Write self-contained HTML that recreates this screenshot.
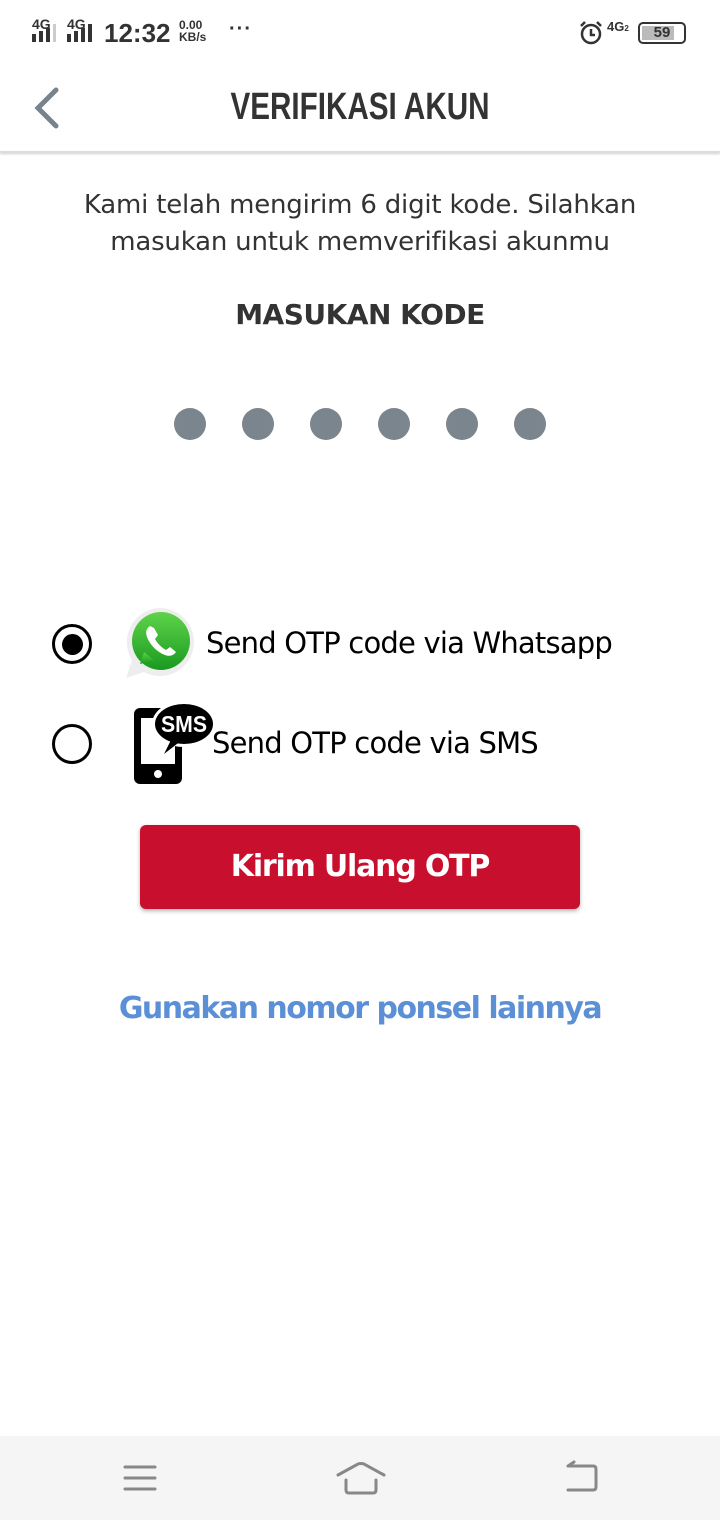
<!DOCTYPE html>
<html><head><meta charset="utf-8"><style>
body{margin:0;width:720px;height:1520px;position:relative;background:#fff;font-family:"Liberation Sans",sans-serif;overflow:hidden}
.a{position:absolute}
.dot{position:absolute;top:408px;width:32px;height:32px;border-radius:50%;background:#7b858d}
</style></head><body>
<!-- status bar -->
<div class="a" style="left:32px;top:16px;font:bold 14px 'Liberation Sans';color:#333">4G</div>
<div class="a" style="left:32px;top:34px;width:4px;height:8px;background:#333"></div>
<div class="a" style="left:39px;top:31px;width:4px;height:11px;background:#333"></div>
<div class="a" style="left:46px;top:28px;width:4px;height:14px;background:#333"></div>
<div class="a" style="left:53px;top:24px;width:3px;height:18px;background:#ccc"></div>
<div class="a" style="left:67px;top:16px;font:bold 14px 'Liberation Sans';color:#333">4G</div>
<div class="a" style="left:67px;top:34px;width:4px;height:8px;background:#333"></div>
<div class="a" style="left:74px;top:31px;width:4px;height:11px;background:#333"></div>
<div class="a" style="left:81px;top:28px;width:4px;height:14px;background:#333"></div>
<div class="a" style="left:88px;top:24px;width:4px;height:18px;background:#333"></div>
<div class="a" style="left:104px;top:18px;font:bold 26px 'Liberation Sans';color:#333">12:32</div>
<div class="a" style="left:179px;top:19px;font:bold 12px/12px 'Liberation Sans';color:#333">0.00<br>KB/s</div>
<div class="a" style="left:229px;top:18px;font:bold 20px 'Liberation Sans';color:#333;letter-spacing:1px">···</div>
<svg class="a" style="left:578px;top:20px" width="26" height="26" viewBox="0 0 26 26"><circle cx="13" cy="14" r="9" fill="none" stroke="#333" stroke-width="2.5"/><path d="M13 9v6h4M3 6l4-4M23 6l-4-4" stroke="#333" stroke-width="2.5" fill="none"/></svg>
<div class="a" style="left:607px;top:19px;font:bold 13px 'Liberation Sans';color:#333">4G<span style="font-size:8px">2</span></div>
<div class="a" style="left:638px;top:22px;width:44px;height:18px;border:2px solid #333;border-radius:5px"></div>
<div class="a" style="left:642px;top:26px;width:32px;height:14px;background:#bbb"></div>
<div class="a" style="left:642px;top:22px;width:40px;text-align:center;font:bold 15px 'Liberation Sans';color:#333;line-height:22px">59</div>
<!-- header -->
<svg class="a" style="left:28px;top:86px" width="34" height="44"><path d="M28 4L10 22l18 18" stroke="#78838c" stroke-width="5" fill="none" stroke-linecap="round"/></svg>
<div class="a" style="left:0;top:86px;width:720px;text-align:center;font:bold 38px 'Liberation Sans Narrow','Liberation Sans',sans-serif;color:#333;transform:scaleX(0.78)">VERIFIKASI AKUN</div>
<div class="a" style="left:0;top:151px;width:720px;height:2px;background:#ddd;box-shadow:0 1px 2px #ccc"></div>
<!-- body -->
<div class="a" style="left:0;top:187px;width:720px;text-align:center;font:26px/37px 'DejaVu Sans','Liberation Sans',sans-serif;color:#333;letter-spacing:-0.2px">Kami telah mengirim 6 digit kode. Silahkan<br>masukan untuk memverifikasi akunmu</div>
<div class="a" style="left:0;top:298px;width:720px;text-align:center;font:bold 28px 'DejaVu Sans','Liberation Sans',sans-serif;color:#333;letter-spacing:-0.5px">MASUKAN KODE</div>
<div class="dot" style="left:174px"></div><div class="dot" style="left:242px"></div><div class="dot" style="left:310px"></div><div class="dot" style="left:378px"></div><div class="dot" style="left:446px"></div><div class="dot" style="left:514px"></div>
<!-- options -->
<div class="a" style="left:52px;top:624px;width:34px;height:34px;border:3.5px solid #000;border-radius:50%"></div>
<div class="a" style="left:62px;top:634px;width:21px;height:21px;background:#000;border-radius:50%"></div>
<svg class="a" style="left:122px;top:606px" width="74" height="74" viewBox="0 0 74 74"><defs><linearGradient id="g" x1="0" y1="0" x2="0" y2="1"><stop offset="0" stop-color="#5fd34a"/><stop offset="1" stop-color="#1a9a20"/></linearGradient></defs><path d="M38 2a34 34 0 1 1-16 64L4 72l6-18A34 34 0 0 1 38 2z" fill="#eee"/><circle cx="39" cy="35" r="29" fill="url(#g)"/><path d="M18 58l4-12 10 8z" fill="url(#g)"/><path d="M28 20c-3 2-5 5-3 11 3 8 10 15 18 18 5 2 9 0 11-3l-6-5-4 3c-4-2-9-7-11-11l3-4-4-7z" fill="#fff"/></svg>
<div class="a" style="left:206px;top:626px;font:29px 'DejaVu Sans','Liberation Sans',sans-serif;color:#000;letter-spacing:-0.8px">Send OTP code via Whatsapp</div>
<div class="a" style="left:52px;top:724px;width:34px;height:34px;border:3.5px solid #000;border-radius:50%"></div>
<svg class="a" style="left:130px;top:700px" width="86" height="86" viewBox="0 0 86 86"><rect x="4" y="8" width="48" height="76" rx="6" fill="#000"/><rect x="11" y="18" width="34" height="46" fill="#fff"/><circle cx="28" cy="74" r="4" fill="#fff"/><ellipse cx="54" cy="24" rx="32" ry="23" fill="#fff"/><ellipse cx="54" cy="24" rx="29" ry="20" fill="#000"/><path d="M42 38l-8 16 18-14z" fill="#000"/><text x="54" y="32" text-anchor="middle" font-family="Liberation Sans" font-weight="bold" font-size="23" fill="#fff" textLength="46" lengthAdjust="spacingAndGlyphs">SMS</text></svg>
<div class="a" style="left:212px;top:726px;font:29px 'DejaVu Sans','Liberation Sans',sans-serif;color:#000;letter-spacing:-0.8px">Send OTP code via SMS</div>
<!-- button -->
<div class="a" style="left:140px;top:825px;width:440px;height:84px;background:#c8102e;border-radius:6px;box-shadow:0 2px 4px rgba(0,0,0,.3);color:#fff;text-align:center;font:bold 30px/84px 'DejaVu Sans','Liberation Sans',sans-serif;letter-spacing:-1.2px">Kirim Ulang OTP</div>
<div class="a" style="left:0;top:991px;width:720px;text-align:center;font:bold 30px 'DejaVu Sans','Liberation Sans',sans-serif;color:#5b8fd6;letter-spacing:-1.5px">Gunakan nomor ponsel lainnya</div>
<!-- nav -->
<div class="a" style="left:0;top:1436px;width:720px;height:84px;background:#f5f5f5"></div>
<svg class="a" style="left:0;top:1436px" width="720" height="84"><g stroke="#888" stroke-width="3" fill="none" stroke-linecap="round"><path d="M125 31h30M125 42h30M125 53h30"/><path d="M338 39l20-11q3-1 6 0l20 11M346 44v10q0 3 3 3h24q3 0 3-3V44"/><path d="M568 30h25q3 0 3 3v18q0 3-3 3h-25M574 26l-6 4"/></g></svg>
</body></html>
